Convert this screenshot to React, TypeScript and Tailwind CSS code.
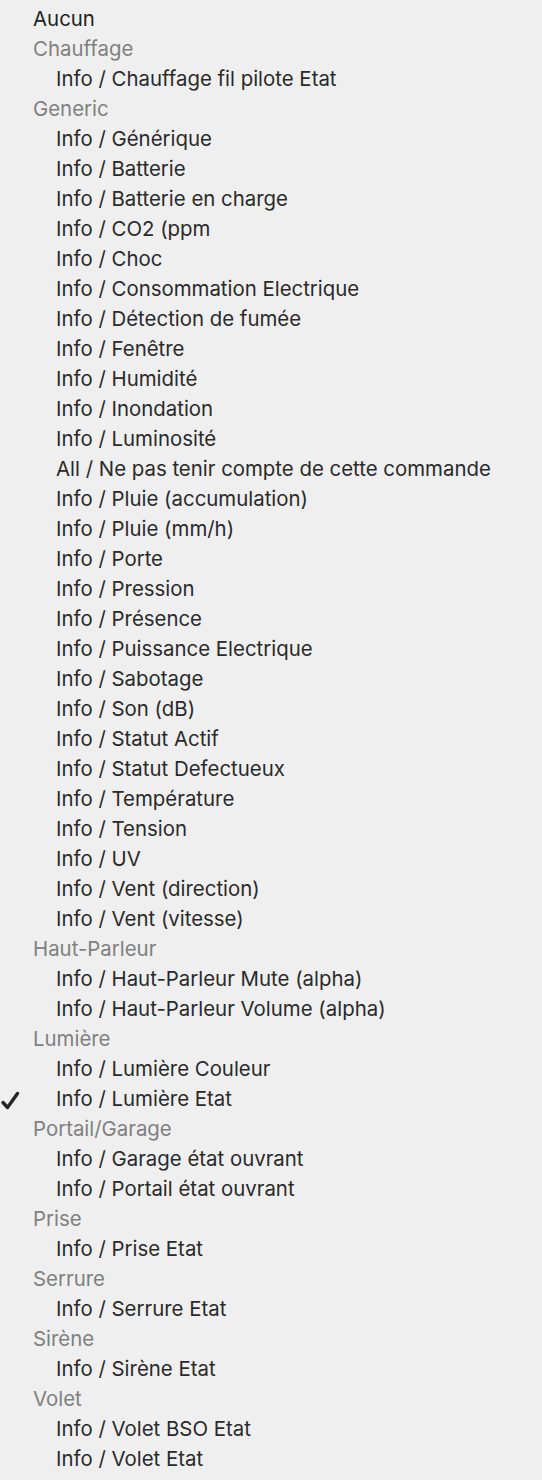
import React from "react";

type Row = { label: string; group?: boolean; checked?: boolean; top?: boolean };

const rows: Row[] = [
  { label: "Aucun", top: true },
  { label: "Chauffage", group: true },
  { label: "Info / Chauffage fil pilote Etat" },
  { label: "Generic", group: true },
  { label: "Info / Générique" },
  { label: "Info / Batterie" },
  { label: "Info / Batterie en charge" },
  { label: "Info / CO2 (ppm" },
  { label: "Info / Choc" },
  { label: "Info / Consommation Electrique" },
  { label: "Info / Détection de fumée" },
  { label: "Info / Fenêtre" },
  { label: "Info / Humidité" },
  { label: "Info / Inondation" },
  { label: "Info / Luminosité" },
  { label: "All / Ne pas tenir compte de cette commande" },
  { label: "Info / Pluie (accumulation)" },
  { label: "Info / Pluie (mm/h)" },
  { label: "Info / Porte" },
  { label: "Info / Pression" },
  { label: "Info / Présence" },
  { label: "Info / Puissance Electrique" },
  { label: "Info / Sabotage" },
  { label: "Info / Son (dB)" },
  { label: "Info / Statut Actif" },
  { label: "Info / Statut Defectueux" },
  { label: "Info / Température" },
  { label: "Info / Tension" },
  { label: "Info / UV" },
  { label: "Info / Vent (direction)" },
  { label: "Info / Vent (vitesse)" },
  { label: "Haut-Parleur", group: true },
  { label: "Info / Haut-Parleur Mute (alpha)" },
  { label: "Info / Haut-Parleur Volume (alpha)" },
  { label: "Lumière", group: true },
  { label: "Info / Lumière Couleur" },
  { label: "Info / Lumière Etat", checked: true },
  { label: "Portail/Garage", group: true },
  { label: "Info / Garage état ouvrant" },
  { label: "Info / Portail état ouvrant" },
  { label: "Prise", group: true },
  { label: "Info / Prise Etat" },
  { label: "Serrure", group: true },
  { label: "Info / Serrure Etat" },
  { label: "Sirène", group: true },
  { label: "Info / Sirène Etat" },
  { label: "Volet", group: true },
  { label: "Info / Volet BSO Etat" },
  { label: "Info / Volet Etat" },
];

export default function App() {
  return (
    <div className="w-[542px] min-h-[1480px] bg-[#efefef] pt-[4px] font-['Inter',sans-serif] text-[20.4px]">
      {rows.map((r, i) => (
        <div key={i} className="relative flex h-[30px] items-center">
          {r.checked && (
            <svg className="absolute left-0 top-[7px]" width="22" height="20" viewBox="0 0 22 20">
              <path d="M3 11.5 L7.5 16.5 L17.5 2.5" fill="none" stroke="#262626" strokeWidth="3.4" strokeLinecap="round" strokeLinejoin="round" />
            </svg>
          )}
          <span
            className={
              r.group
                ? "pl-[33px] text-[#808080]"
                : r.top
                ? "pl-[33px] text-[#222]"
                : "pl-[56px] text-[#2a2a2a]"
            }
          >
            {r.label}
          </span>
        </div>
      ))}
    </div>
  );
}
